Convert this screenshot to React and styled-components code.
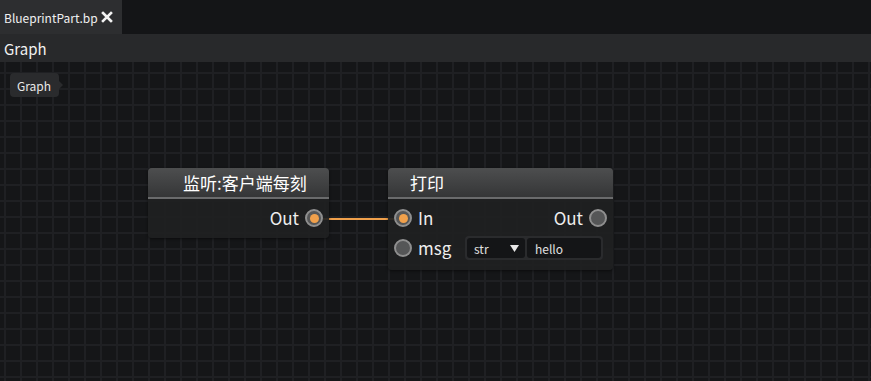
import styled, { createGlobalStyle } from "styled-components"

const GlobalStyle = createGlobalStyle`
  html, body {
    margin: 0;
    padding: 0;
    background: #151618;
    font-family: "Noto Sans CJK SC", "Noto Sans", sans-serif;
  }
`

const Page = styled.div`
  width: 871px;
  height: 381px;
  display: flex;
  flex-direction: column;
  overflow: hidden;
`

const TabBar = styled.div`
  height: 34px;
  background: #141517;
  display: flex;
`

const Tab = styled.div`
  width: 122px;
  background: #2d2e30;
  color: #f0f0f0;
  font-size: 12px;
  display: flex;
  align-items: center;
  padding-left: 4px;
  gap: 3px;
  box-sizing: border-box;
`

const TitleBar = styled.div`
  height: 28px;
  background: #28292b;
  color: #f2f2f2;
  font-size: 15px;
  display: flex;
  align-items: center;
  padding-left: 4px;
`

const Canvas = styled.div`
  flex: 1;
  position: relative;
  background-color: #151618;
  background-image:
    linear-gradient(to right, #1f2023 2px, transparent 2px),
    linear-gradient(to bottom, #1f2023 2px, transparent 2px);
  background-size: 16px 16px;
  background-position: 4px 10px;
`

const Badge = styled.div`
  position: absolute;
  left: 10px;
  top: 11px;
  height: 24px;
  padding: 0 8px 0 7px;
  background: #2a2b2d;
  border-radius: 4px;
  color: #e8e8e8;
  font-size: 12px;
  display: flex;
  align-items: center;
  &::after {
    content: "";
    position: absolute;
    right: -4px;
    top: 8px;
    border-left: 4px solid #2a2b2d;
    border-top: 4px solid transparent;
    border-bottom: 4px solid transparent;
  }
`

const Node = styled.div`
  position: absolute;
  left: ${(p) => p.$x}px;
  top: ${(p) => p.$y}px;
  width: ${(p) => p.$w}px;
  border-radius: 4px;
  background: rgba(32, 33, 34, 0.92);
  box-shadow: 0 1px 3px rgba(0, 0, 0, 0.5);
  overflow: hidden;
`

const NodeHeader = styled.div`
  height: 29px;
  background: linear-gradient(to bottom, #4d4e4f, #353637);
  border-bottom: 2px solid #6a6b6c;
  color: #ffffff;
  font-size: 17px;
  display: flex;
  align-items: center;
  padding-left: ${(p) => p.$pad}px;
`

const NodeBody = styled.div`
  display: flex;
  flex-direction: column;
  gap: 8px;
  padding: 9px 6px 10px 6px;
`

const PinRow = styled.div`
  min-height: 20px;
  display: flex;
  align-items: center;
  justify-content: ${(p) => (p.$end ? "flex-end" : "space-between")};
`

const PinGroup = styled.div`
  display: flex;
  align-items: center;
  gap: 6px;
`

const PinLabel = styled.span`
  color: #eeeeee;
  font-size: 17px;
  line-height: 20px;
`

const Pin = styled.span`
  width: 18px;
  height: 18px;
  border-radius: 50%;
  border: 2px solid #8f8f8f;
  background: #555657;
  box-sizing: border-box;
  display: flex;
  align-items: center;
  justify-content: center;
  &::after {
    content: "";
    display: ${(p) => (p.$linked ? "block" : "none")};
    width: 9px;
    height: 9px;
    border-radius: 50%;
    background: #f0a04b;
  }
`

const Field = styled.div`
  display: flex;
  gap: 2px;
  padding: 2px;
  background: #2a2b2d;
  border-radius: 4px;
  margin-right: 4px;
`

const Select = styled.div`
  width: 58px;
  height: 20px;
  background: #141517;
  border-radius: 3px;
  color: #e0e0e0;
  font-size: 12px;
  display: flex;
  align-items: center;
  justify-content: space-between;
  padding: 0 6px 0 7px;
  box-sizing: border-box;
`

const Input = styled.div`
  width: 74px;
  height: 20px;
  background: #141517;
  border-radius: 3px;
  color: #e0e0e0;
  font-size: 12px;
  display: flex;
  align-items: center;
  padding-left: 8px;
  box-sizing: border-box;
`

const Wires = styled.svg`
  position: absolute;
  left: 0;
  top: 0;
  pointer-events: none;
`

const App = () => {
  return (
    <Page>
      <GlobalStyle />
      <TabBar>
        <Tab>
          BlueprintPart.bp
          <svg width="12" height="12" viewBox="0 0 12 12">
            <path d="M2 2 L10 10 M10 2 L2 10" stroke="#f2f2f2" strokeWidth="2.6" strokeLinecap="square" />
          </svg>
        </Tab>
      </TabBar>
      <TitleBar>Graph</TitleBar>
      <Canvas>
        <Badge>Graph</Badge>
        <Wires width="871" height="319">
          <line x1="323" y1="157" x2="394" y2="157" stroke="#f0a04b" strokeWidth="2" />
        </Wires>
        <Node $x={148} $y={106} $w={181}>
          <NodeHeader $pad={35}>监听:客户端每刻</NodeHeader>
          <NodeBody>
            <PinRow $end>
              <PinGroup>
                <PinLabel>Out</PinLabel>
                <Pin $linked />
              </PinGroup>
            </PinRow>
          </NodeBody>
        </Node>
        <Node $x={388} $y={106} $w={225}>
          <NodeHeader $pad={22}>打印</NodeHeader>
          <NodeBody>
            <PinRow>
              <PinGroup>
                <Pin $linked />
                <PinLabel>In</PinLabel>
              </PinGroup>
              <PinGroup>
                <PinLabel>Out</PinLabel>
                <Pin />
              </PinGroup>
            </PinRow>
            <PinRow>
              <PinGroup>
                <Pin />
                <PinLabel>msg</PinLabel>
              </PinGroup>
              <Field>
                <Select>
                  str
                  <svg width="9" height="7" viewBox="0 0 9 7">
                    <path d="M0 0 H9 L4.5 7 Z" fill="#e8e8e8" />
                  </svg>
                </Select>
                <Input>hello</Input>
              </Field>
            </PinRow>
          </NodeBody>
        </Node>
      </Canvas>
    </Page>
  )
}

export default App
